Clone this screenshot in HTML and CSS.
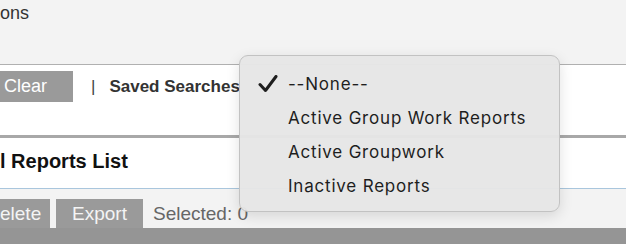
FILE: index.html
```html
<HTML>
   <HEAD>
      <TITLE>Reports</TITLE>
      <link rel="stylesheet" href="styles.css">
   </HEAD>
   <BODY>
      <DIV class='TopArea'>ons</DIV>
      <DIV class='SearchBar'>
         <SPAN class='GrayButton ClearButton'>Clear</SPAN>
         <SPAN class='Pipe'>|</SPAN>
         <SPAN class='SavedLabel'>Saved Searches</SPAN>
      </DIV>
      <DIV class='TitleBar'>l Reports List</DIV>
      <DIV class='ActionBar'>
         <SPAN class='GrayButton DeleteButton'>elete</SPAN>
         <SPAN class='GrayButton ExportButton'>Export</SPAN>
         <SPAN class='Selected'>Selected: 0</SPAN>
      </DIV>
      <DIV class='FooterBar'></DIV>

      <DIV class='Menu'>
         <DIV class='MenuItem'>
            <SPAN class='Check'>
               <svg width='20' height='18' viewBox='0 0 20 18'>
                  <path d='M2 9.5 L7.5 15.5 L18 1.5' fill='none' stroke='#1e1e1e' stroke-width='3' stroke-linecap='round' stroke-linejoin='round'/>
               </svg>
            </SPAN>--None--
         </DIV>
         <DIV class='MenuItem'><SPAN class='Check'></SPAN>Active Group Work Reports</DIV>
         <DIV class='MenuItem'><SPAN class='Check'></SPAN>Active Groupwork</DIV>
         <DIV class='MenuItem'><SPAN class='Check'></SPAN>Inactive Reports</DIV>
      </DIV>
   </BODY>
</HTML>
```
FILE: styles.css
```css
BODY
{
   margin:      0;
   width:       626px;
   height:      244px;
   overflow:    hidden;
   position:    relative;
   font-family: 'Liberation Sans', Arial, sans-serif;
   background:  #f3f3f3;
}
.TopArea
{
   height:      64px;
   font-size:   18px;
   line-height: 26px;
   color:       #333;
   background:  #f3f3f3;
   border-bottom: 1px #b0b0b0 solid;
}
.SearchBar
{
   height:      73px;
   background:  #fff;
   display:     flex;
   align-items: flex-start;
   padding-top: 6px;
   box-sizing:  border-box;
   border-bottom: 3px #a8a8a8 solid;
}
.GrayButton
{
   background:  #9a9a9a;
   color:       #fff;
   font-size:   18px;
   height:      31px;
   line-height: 31px;
   display:     inline-block;
}
.ClearButton
{
   width:        69px;
   padding-left: 4px;
}
.Pipe
{
   font-size:    17px;
   line-height:  31px;
   color:        #444;
   margin-left:  18px;
}
.SavedLabel
{
   font-size:    17px;
   font-weight:  bold;
   line-height:  31px;
   color:        #333;
   margin-left:  14px;
}
.TitleBar
{
   height:        50px;
   background:    #fff;
   font-size:     20px;
   font-weight:   bold;
   color:         #111;
   line-height:   46px;
   border-bottom: 1px #a9c6dd solid;
}
.ActionBar
{
   height:      39px;
   display:     flex;
   align-items: flex-end;
   gap:         6px;
   background:  #f3f3f3;
}
.ActionBar .GrayButton
{
   height:      29px;
   line-height: 29px;
   font-size:   19px;
   color:       #f4f4f4;
}
.DeleteButton { width: 50px; }
.ExportButton
{
   width:        87px;
   text-align:   center;
}
.Selected
{
   font-size:    19px;
   color:        #666;
   line-height:  29px;
   margin-left:  4px;
}
.FooterBar
{
   height:     16px;
   background: #959595;
}
.Menu
{
   position:      absolute;
   left:          239px;
   top:           55px;
   width:         321px;
   height:        157px;
   box-sizing:    border-box;
   padding-top:   11px;
   background:    rgba(230,230,230,0.97);
   border:        1px #c2c2c2 solid;
   border-radius: 9px;
   box-shadow:    0 4px 14px rgba(0,0,0,0.12);
   font-family:   Inter, 'Noto Sans', sans-serif;
   font-size:     17px;
   color:         #1e1e1e;
}
.MenuItem
{
   height:      34px;
   line-height: 34px;
   display:     flex;
   align-items: center;
   letter-spacing: 0.8px;
}
.Check
{
   width:        48px;
   padding-left: 18px;
   box-sizing:   border-box;
   display:      flex;
   align-items:  center;
}
```
